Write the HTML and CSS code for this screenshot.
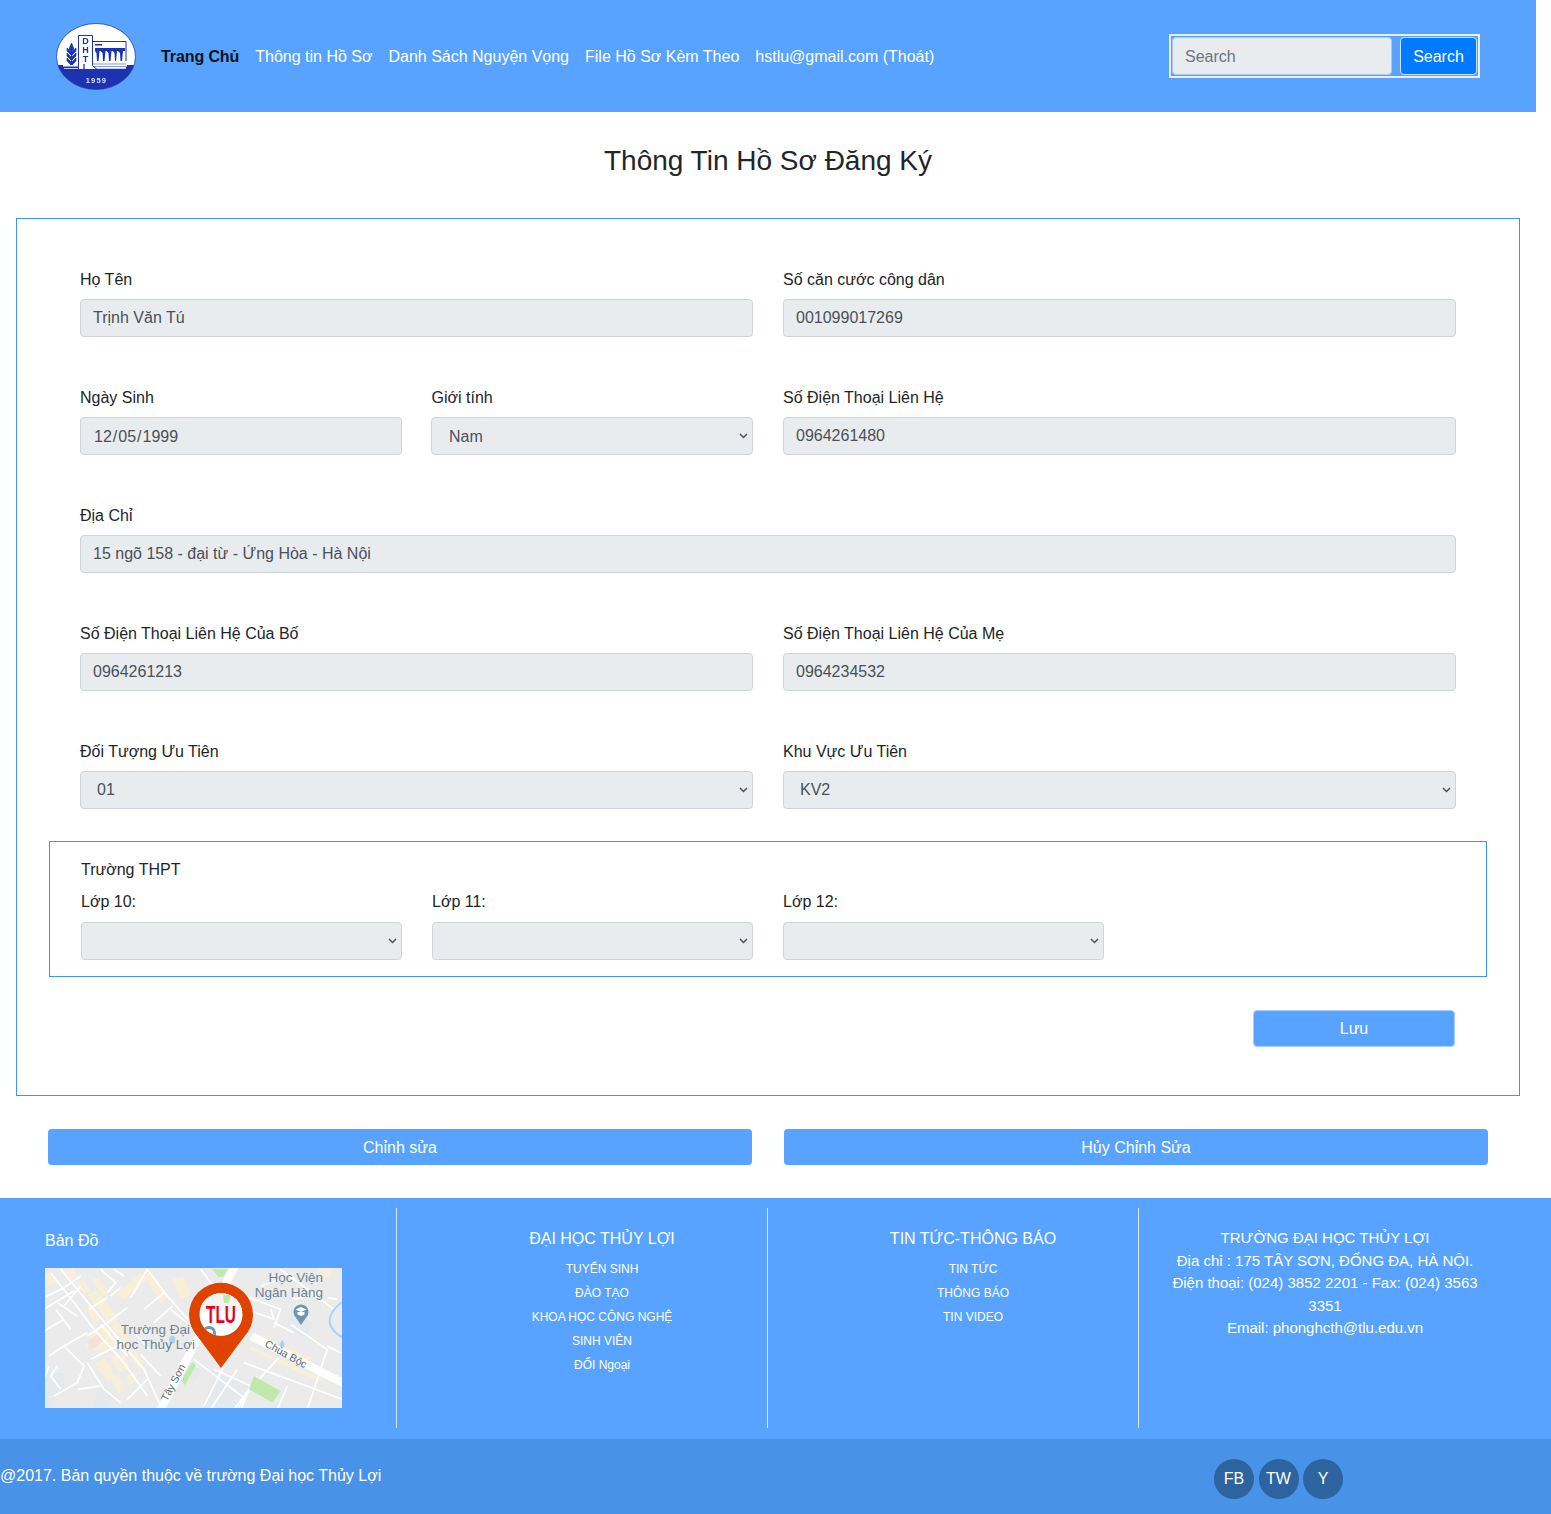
FILE: index.html
```html
<!DOCTYPE html>
<html lang="vi">
<head>
<meta charset="utf-8">
<title>Thông Tin Hồ Sơ Đăng Ký</title>
<link rel="stylesheet" href="styles.css">
</head>
<body>
<header class="topbar">
  <svg class="logo" viewBox="0 0 80 67" width="80" height="67" aria-label="Logo">
    <defs>
      <clipPath id="logoClip"><ellipse cx="40" cy="33.500" rx="39.500" ry="33"/></clipPath>
      <filter id="soft"><feGaussianBlur stdDeviation=".35"/></filter>
    </defs>
    <ellipse cx="40" cy="33.500" rx="39.500" ry="33" fill="#fff"/>
    <g clip-path="url(#logoClip)" filter="url(#soft)">
      <rect x="0" y="42" width="80" height="26" fill="#1b32b0"/>
      <path d="M15.500 20l-2.500 6 2.500 3 2.500-3zM11 25l4 4 0 3-4-4zM20 25l-4 4 0 3 4-4zM11 30l4 4 0 3-4-4zM20 30l-4 4 0 3 4-4zM11 35l4 4 0 3-4-4zM20 35l-4 4 0 3 4-4z" fill="#1b32b0" stroke="#1b32b0" stroke-width=".7"/>
      <rect x="15" y="26" width="1.200" height="20" fill="#1b32b0"/>
      <rect x="7" y="42" width="64" height="1.500" fill="#fff"/>
      <rect x="36" y="39" width="34" height="6" fill="#fff"/>
      <rect x="36" y="40.500" width="34" height="1" fill="#8b97d4"/>
      <rect x="36" y="43" width="34" height="1" fill="#8b97d4"/>
      <rect x="8" y="45" width="62" height="1" fill="#c9cfee"/>
      <path d="M37 18.500H70V38" fill="none" stroke="#1b32b0" stroke-width="1"/>
      <path d="M22.500 47V12.500H36.500V42.500L41 46.500H22.500z" fill="#fff" stroke="#1b32b0" stroke-width="1"/>
      <path d="M39 25h30v3h-2l-1 10h-1.500l-.5-8-2-2h-1l-1 10H59l-.5-8-2-2h-1l-1 10H53l-.5-8-2-2h-1l-1 10H47l-.5-8-2-2h-1l-1 10H41l-.5-8-1.500-2z" fill="#1b32b0"/>
      <rect x="39" y="21" width="7" height="1.500" fill="#1b32b0"/>
      <text class="logo-letters" x="29.500" y="20.500">D</text>
      <text class="logo-letters" x="29.500" y="29.500">H</text>
      <text class="logo-letters" x="29.500" y="38.500">T</text>
      <text class="logo-letters" x="29.500" y="47">L</text>
      <text class="logo-year" x="40.500" y="60">1959</text>
    </g>
    <ellipse cx="40" cy="33.500" rx="39.500" ry="33" fill="none" stroke="#2a3aa8" stroke-width=".8"/>
  </svg>
  <nav class="mainnav">
    <a class="navlink navlink-active" href="#">Trang Chủ</a>
    <a class="navlink" href="#">Thông tin Hồ Sơ</a>
    <a class="navlink" href="#">Danh Sách Nguyện Vọng</a>
    <a class="navlink" href="#">File Hồ Sơ Kèm Theo</a>
    <a class="navlink" href="#">hstlu@gmail.com (Thoát)</a>
  </nav>
  <form class="searchform">
    <input class="searchinput" type="text" placeholder="Search">
    <button class="searchbtn" type="button">Search</button>
  </form>
</header>

<main class="page">
  <h1 class="pagetitle">Thông Tin Hồ Sơ Đăng Ký</h1>
  <section class="formbox">
    <div class="fields">
      <div class="field half"><label>Họ Tên</label><input class="control" value="Trịnh Văn Tú" disabled></div>
      <div class="field half"><label>Số căn cước công dân</label><input class="control" value="001099017269" disabled></div>

      <div class="field"><label>Ngày Sinh</label><input class="control lowered" type="date" value="1999-12-05" disabled></div>
      <div class="field"><label>Giới tính</label><select class="control lowered tucked" disabled><option>Nam</option></select></div>
      <div class="field half"><label>Số Điện Thoại Liên Hệ</label><input class="control" value="0964261480" disabled></div>

      <div class="field full"><label>Địa Chỉ</label><input class="control" value="15 ngõ 158 - đại từ - Ứng Hòa - Hà Nội" disabled></div>

      <div class="field half"><label>Số Điện Thoại Liên Hệ Của Bố</label><input class="control" value="0964261213" disabled></div>
      <div class="field half"><label>Số Điện Thoại Liên Hệ Của Mẹ</label><input class="control" value="0964234532" disabled></div>

      <div class="field half"><label>Đối Tượng Ưu Tiên</label><select class="control" disabled><option>01</option></select></div>
      <div class="field half"><label>Khu Vực Ưu Tiên</label><select class="control" disabled><option>KV2</option></select></div>
    </div>

    <div class="schoolbox">
      <div class="schooltitle">Trường THPT</div>
      <div class="schoolgrid">
        <div class="schoolfield"><label>Lớp 10:</label><select class="control" disabled><option></option></select></div>
        <div class="schoolfield"><label>Lớp 11:</label><select class="control" disabled><option></option></select></div>
        <div class="schoolfield"><label>Lớp 12:</label><select class="control" disabled><option></option></select></div>
      </div>
    </div>

    <div class="saverow"><button class="btn savebtn" type="button">Lưu</button></div>
  </section>

  <div class="actions">
    <button class="btn actionbtn" type="button">Chỉnh sửa</button>
    <button class="btn actionbtn" type="button">Hủy Chỉnh Sửa</button>
  </div>
</main>

<footer class="sitefooter">
  <div class="footcols">
    <div class="footcol mapcol">
      <div class="maptitle">Bản Đồ</div>
      <svg class="map" viewBox="0 0 297 140" width="297" height="140" aria-label="Bản đồ">
        <defs>
          <clipPath id="mapHole"><circle cx="176" cy="46.500" r="21.500"/></clipPath>
          <filter id="mapSoft"><feGaussianBlur stdDeviation=".3"/></filter>
        </defs>
        <rect width="297" height="140" fill="#ebebeb"/>
        <g filter="url(#mapSoft)">
          <g transform="translate(-1 -2) scale(.33333)">
            <g fill="#e4e9ee">
              <path d="M5 320h55v70H5zM165 355l50 35-30 40h-40zM0 395h30v35H0z"/>
            </g>
            <g fill="#f8efd8">
              <path d="M55 12l30-5 15 25-25 10zM95 50l25-10 20 35-20 10zM130 85l30-10 65 85-30 15zM125 125l20-10 25 45-20 10zM150 190l40-10 35 60-35 20-40-10-25-10zM200 180l20-15 80 130-15 15zM150 290l35-15 30 60-25 10zM195 270l50-5 10 45-30 10zM200 335l25-10 15 50-20 5zM250 325l30-5-10 30-20 5zM220 85l70-65 20 20-70 60zM300 30l20-15 50 75-20 20zM385 40l35-10 20 55-30 15zM145 40l20-5 30 45-20 8zM0 30l25-10 15 30-25 10z"/>
            </g>
            <path d="M130 225l30-20 25 10-30 30-20 5z" fill="#f6e2dc"/>
            <path d="M380 210c10-6 20 10 10 22-12 8-20-10-10-22z" fill="#a9d3f5"/>
            <g fill="none" stroke="#fff" stroke-width="5" stroke-linejoin="round">
              <path d="M50 10L120 95 300 310 350 420M20 20L90 110 150 190 240 290 310 390M0 95L60 65 110 30M0 130L90 75M35 130L80 190M100 150L40 110M130 210L190 170 250 125M60 240L130 200M15 270L60 240 120 300 100 350 30 390M140 280L200 250 240 230M200 90L230 65M170 10L215 50 190 80M260 95L310 10 370 90 440 170M300 130L360 80M330 170L385 120M210 10L240 30M130 290L180 370 230 410M100 370L170 360M40 300L20 330 50 370M250 400L310 340M380 130L440 180M0 195L60 160M60 120L110 60M135 130L190 95M0 340L15 300M170 175L250 270M270 200L320 255M290 265L350 330"/>
            </g>
          </g>
          <g transform="translate(149 -2) scale(.33333)">
            <g fill="#e4e9ee">
              <path d="M60 310l110 50-30 70H30zM290 130l70 45-30 40-50-35zM-15 290l40 25-30 40z"/>
            </g>
            <g fill="#f8efd8">
              <path d="M200 205l150 70-5 10-150-70zM170 240l215 95-5 12-215-97zM370 5h45l-5 30-30-5z"/>
            </g>
            <g fill="none" stroke="#fff" stroke-width="5" stroke-linejoin="round">
              <path d="M170 135L240 160 230 130M180 100L260 130 240 185M290 175L400 250 370 340 340 430M240 170L300 200M400 240L440 260M260 10L420 130M150 290L445 400M190 330L130 430M255 275L190 345M130 310L50 430M90 300L30 420M60 310L170 360 140 430M0 280L150 395M165 370L120 430M280 360L250 430M400 95L430 100M20 10L50 50 180 100M200 60L260 40M300 100L380 80"/>
            </g>
            <path d="M445 108c-30 20-50 55-30 80 8 12 18 20 30 25" fill="none" stroke="#a9d3f5" stroke-width="6"/>
            <path d="M55 10h45l-12 22H72zM180 330l80 45-25 35-70-40z" fill="#c0e8ad"/>
            <path d="M265 222c8 12 10 20 0 24-10 0-14-10 0-24z" fill="#a9d3f5"/>
          </g>
          <path d="M190 -2L116 141" stroke="#fff" stroke-width="8" fill="none"/>
          <path d="M206 68L300 116" stroke="#fff" stroke-width="8" fill="none"/>
          <path d="M136 113l11-19 4 3-11 20z" fill="#c0e8ad"/>
        </g>
        <text class="mapname" x="278" y="14" text-anchor="end">Học Viện</text>
        <text class="mapname" x="278" y="29" text-anchor="end">Ngân Hàng</text>
        <text class="mapname" x="145" y="66" text-anchor="end">Trường Đại</text>
        <text class="mapname" x="150" y="81" text-anchor="end">học Thủy Lợi</text>
        <text class="mapstreet" transform="translate(219 78) rotate(29)">Chùa Bộc</text>
        <text class="mapstreet" transform="translate(122 134) rotate(-62)">Tây Sơn</text>
        <path d="M256 57l-5.500-8A7.500 7.500 0 1 1 261.500 49z" fill="#6f96aa"/>
        <path d="M250.500 41.500l5.500-2.500 5.500 2.500-5.500 2.500z" fill="#fff"/>
        <path d="M252.500 44h7v2.500l-3.500 1.500-3.500-1.500z" fill="#fff"/>
        <path d="M176 100L153 69A32 32 0 1 1 199 69Z" fill="#df4300"/>
        <circle cx="176" cy="46.500" r="21.500" fill="#fff"/>
        <g clip-path="url(#mapHole)">
          <rect x="155" y="25" width="42" height="18" fill="#f4f4f2"/>
          <path d="M178 27h8l-2 8h-5z" fill="#c0e8ad"/>
          <circle cx="164" cy="65" r="5.500" fill="none" stroke="#6f96aa" stroke-width="3"/>
        </g>
        <text class="pinlabel" x="176" y="55" textLength="30" lengthAdjust="spacingAndGlyphs">TLU</text>
      </svg>
    </div>
    <div class="footcol linkcol">
      <div class="foothead">ĐẠI HỌC THỦY LỢI</div>
      <a class="footlink" href="#">TUYỂN SINH</a>
      <a class="footlink" href="#">ĐÀO TẠO</a>
      <a class="footlink" href="#">KHOA HỌC CÔNG NGHỆ</a>
      <a class="footlink" href="#">SINH VIÊN</a>
      <a class="footlink" href="#">ĐỐI Ngoại</a>
    </div>
    <div class="footcol linkcol">
      <div class="foothead">TIN TỨC-THÔNG BÁO</div>
      <a class="footlink" href="#">TIN TỨC</a>
      <a class="footlink" href="#">THÔNG BÁO</a>
      <a class="footlink" href="#">TIN VIDEO</a>
    </div>
    <div class="footcol contactcol">
      <div>TRƯỜNG ĐẠI HỌC THỦY LỢI</div>
      <div>Địa chỉ : 175 TÂY SƠN, ĐỐNG ĐA, HÀ NỘI.</div>
      <div>Điện thoại: (024) 3852 2201 - Fax: (024) 3563 3351</div>
      <div>Email: phonghcth@tlu.edu.vn</div>
    </div>
  </div>
  <div class="copybar">
    <div class="copytext">@2017. Bản quyền thuộc về trường Đại học Thủy Lợi</div>
    <div class="socials">
      <a class="social" href="#">FB</a>
      <a class="social" href="#">TW</a>
      <a class="social" href="#">Y</a>
    </div>
  </div>
</footer>
</body>
</html>
```
FILE: styles.css
```css
* { box-sizing: border-box; }
html, body { margin: 0; padding: 0; }
body {
  font-family: "Liberation Sans", Arial, sans-serif;
  font-size: 16px;
  line-height: 24px;
  color: #212529;
  background: #fff;
}

/* top bar */
.topbar {
  width: 1536px;
  height: 112px;
  background: #57a3ff;
  display: flex;
  align-items: center;
  padding: 0 56px;
}
.logo { flex: none; display: block; margin-top: 1px; }
.logo-letters { font: bold 9px "Liberation Sans", sans-serif; fill: #1b32b0; text-anchor: middle; }
.logo-year { font: bold 7.500px "Liberation Sans", sans-serif; fill: #dfe3f4; text-anchor: middle; letter-spacing: 1.200px; }
.mainnav { display: flex; margin-left: 17px; padding-top: 2px; flex: 1; }
.navlink { color: #fff; text-decoration: none; padding: 0 8px; white-space: nowrap; }
.navlink-active { color: #0b1320; font-weight: bold; letter-spacing: -.1px; }

.searchform {
  flex: none;
  display: flex;
  align-items: flex-start;
  width: 311px;
  height: 44px;
  border: 2px solid #e9eef5;
  padding: 1px 1px 0;
}
.searchinput {
  width: 220px;
  height: 38px;
  margin-right: 8px;
  padding: 7px 12px 5px;
  font: inherit;
  color: #495057;
  background: #e9ecef;
  border: 1px solid #a9c8ee;
  border-radius: 4px;
}
.searchinput::placeholder { color: #6c757d; opacity: 1; }
.searchbtn {
  width: 77px;
  height: 38px;
  font: inherit;
  color: #fff;
  background: #007bff;
  border: 1px solid #cfe3ff;
  border-radius: 4px;
  padding: 1px 0 0;
}

/* main */
.page { width: 1536px; }
.pagetitle {
  margin: 32px 0 40px;
  font-size: 28px;
  font-weight: 400;
  line-height: 34px;
  text-align: center;
  color: #212529;
}
.formbox {
  margin: 0 16px;
  border: 1px solid #3d93ff;
  padding: 48px 32px;
}
.fields {
  display: grid;
  grid-template-columns: repeat(4, 1fr);
  column-gap: 30px;
  row-gap: 48px;
  margin: 0 31px 32px;
}
.field { min-width: 0; }
.half { grid-column: span 2; }
.full { grid-column: span 4; }
label { display: block; padding-top: 1px; margin-bottom: 7px; }
.control {
  display: block;
  width: 100%;
  height: 38px;
  padding: 6px 12px;
  font: inherit;
  color: #495057;
  background-color: #e9ecef;
  border: 1px solid #ced4da;
  border-radius: 4px;
  opacity: 1;
}
select.control {
  appearance: none;
  padding-left: 16px;
  background-image: url("data:image/svg+xml,%3Csvg xmlns='http://www.w3.org/2000/svg' width='9' height='6'%3E%3Cpath d='M1 1l3.500 3.500L8 1' fill='none' stroke='%23495057' stroke-width='1.500'/%3E%3C/svg%3E");
  background-repeat: no-repeat;
  background-position: right 4px center;
}
.control.lowered { padding-top: 7px; padding-bottom: 5px; }
select.control.tucked {
  margin-left: -.5px;
  width: calc(100% + .5px);
  padding-left: 17px;
}

.schoolbox {
  border: 1px solid #3d93ff;
  padding: 15px 31px 16px;
}
.schooltitle { padding-top: 1px; margin-bottom: 7px; }
.schoolgrid {
  display: grid;
  grid-template-columns: repeat(4, 1fr);
  column-gap: 30px;
}
.schoolfield label { margin-bottom: 8px; }

.saverow { display: flex; justify-content: flex-end; margin: 33px 32px 0 0; }
.btn {
  font: inherit;
  color: #fff;
  background: #57a3ff;
  border: 0;
  border-radius: 4px;
  padding: 0;
}
.savebtn { width: 202px; height: 37px; border: 1px solid #a9d0ff; }
.actions {
  display: grid;
  grid-template-columns: 1fr 1fr;
  column-gap: 32px;
  padding: 33px 48px;
}
.actionbtn { height: 36px; padding-top: 1px; }

/* footer */
.sitefooter { width: 100%; background: #57a3ff; color: #fff; }
.footcols {
  display: grid;
  grid-template-columns: 396px 371px 371px 1fr;
  padding: 10px 0 11px;
  height: 241px;
}
.footcol { height: 220px; min-width: 0; }
.mapcol { padding: 21px 0 0 45px; }
.maptitle { margin-bottom: 15px; }
.map { display: block; }
.mapname { font: 13.500px "Liberation Sans", sans-serif; fill: #6b8494; }
.mapstreet { font: 10.500px "Liberation Sans", sans-serif; fill: #55666e; }
.pinlabel {
  font: bold 23px "Liberation Sans", sans-serif;
  fill: #e8001c;
  text-anchor: middle;
}
.linkcol {
  border-left: 1px solid #d7e8ff;
  padding: 19px 0 0 40px;
  text-align: center;
}
.foothead { margin-bottom: 6px; }
.footlink {
  display: block;
  color: #fff;
  text-decoration: none;
  font-size: 12px;
  line-height: 24px;
}
.contactcol {
  border-left: 1px solid #d7e8ff;
  padding: 19px 60px 0 20px;
  text-align: center;
  font-size: 15px;
  line-height: 22.500px;
}
.copybar {
  height: 75px;
  background: #4892e8;
  display: flex;
}
.copytext { padding: 25px 0 0; width: 1214px; }
.socials { display: flex; gap: 4.500px; padding-top: 20px; }
.social {
  width: 40px;
  height: 40px;
  border-radius: 50%;
  background: #2d639f;
  color: #fff;
  text-decoration: none;
  display: flex;
  align-items: center;
  justify-content: center;
}
```
